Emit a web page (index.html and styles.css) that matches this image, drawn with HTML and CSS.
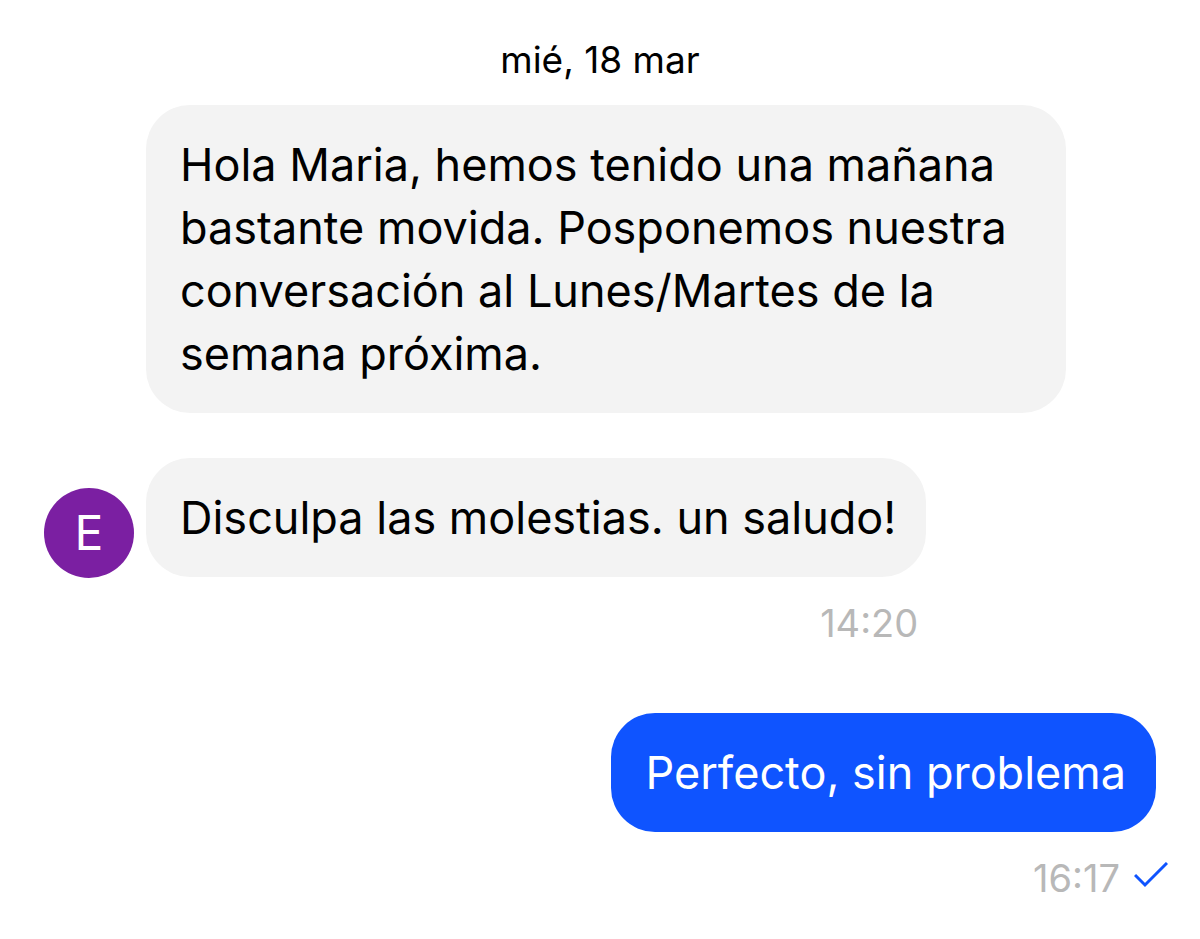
FILE: index.html
```html
<!DOCTYPE html>
<html lang="es">
<head>
    <meta charset="UTF-8">
    <meta name="viewport" content="width=device-width, initial-scale=1.0">
    <title>Chat</title>
    <link rel="stylesheet" href="styles.css">
</head>

<body>
    <main class="chat">
        <p class="date">mié, 18 mar</p>

        <div class="group received">
            <div class="bubble">Hola Maria, hemos tenido una mañana bastante movida. Posponemos nuestra conversación al Lunes/Martes de la semana próxima.</div>
        </div>

        <div class="group received">
            <div class="avatar">E</div>
            <div class="message">
                <div class="bubble">Disculpa las molestias. un saludo!</div>
                <div class="meta"><time>14:20</time></div>
            </div>
        </div>

        <div class="group sent">
            <div class="message">
                <div class="bubble">Perfecto, sin problema</div>
                <div class="meta">
                    <time>16:17</time>
                    <svg class="check" viewBox="0 0 34 26" aria-hidden="true">
                        <path d="M1 13 L11 23 L33 1" />
                    </svg>
                </div>
            </div>
        </div>
    </main>
</body>
</html>
```

FILE: styles.css
```css
body {
    margin: 0;
    background-color: #fff;
    color: #000;
    font-family: Inter, "Liberation Sans", sans-serif;
}

.chat {
    padding: 36px 44px;
}

.date {
    margin: 0 0 21px;
    text-align: center;
    font-size: 37px;
    line-height: 48px;
}

.group {
    display: flex;
}

.received {
    padding-left: 102px;
    margin-bottom: 45px;
}

.bubble {
    max-width: 856px;
    padding: 28px 30px 28px 34px;
    border-radius: 44px;
    background-color: #f3f3f3;
    font-size: 45px;
    line-height: 63px;
}

.avatar {
    width: 90px;
    height: 90px;
    margin: 30px 12px 0 -102px;
    border-radius: 50%;
    background-color: #7b1fa2;
    color: #fff;
    font-size: 48px;
    line-height: 90px;
    text-align: center;
}

.meta {
    display: flex;
    justify-content: flex-end;
    padding: 22px 8px 0;
    color: #b8b8b8;
    font-size: 38px;
    line-height: 48px;
}

.sent {
    justify-content: flex-end;
    margin-top: 66px;
}

.sent .bubble {
    background-color: #0f54ff;
    color: #fff;
}

.sent .meta {
    padding-right: 0;
    margin-right: -12px;
}

.check {
    width: 34px;
    height: 26px;
    margin: 8px 0 0 14px;
    fill: none;
    stroke: #0f54ff;
    stroke-width: 3;
}
```
